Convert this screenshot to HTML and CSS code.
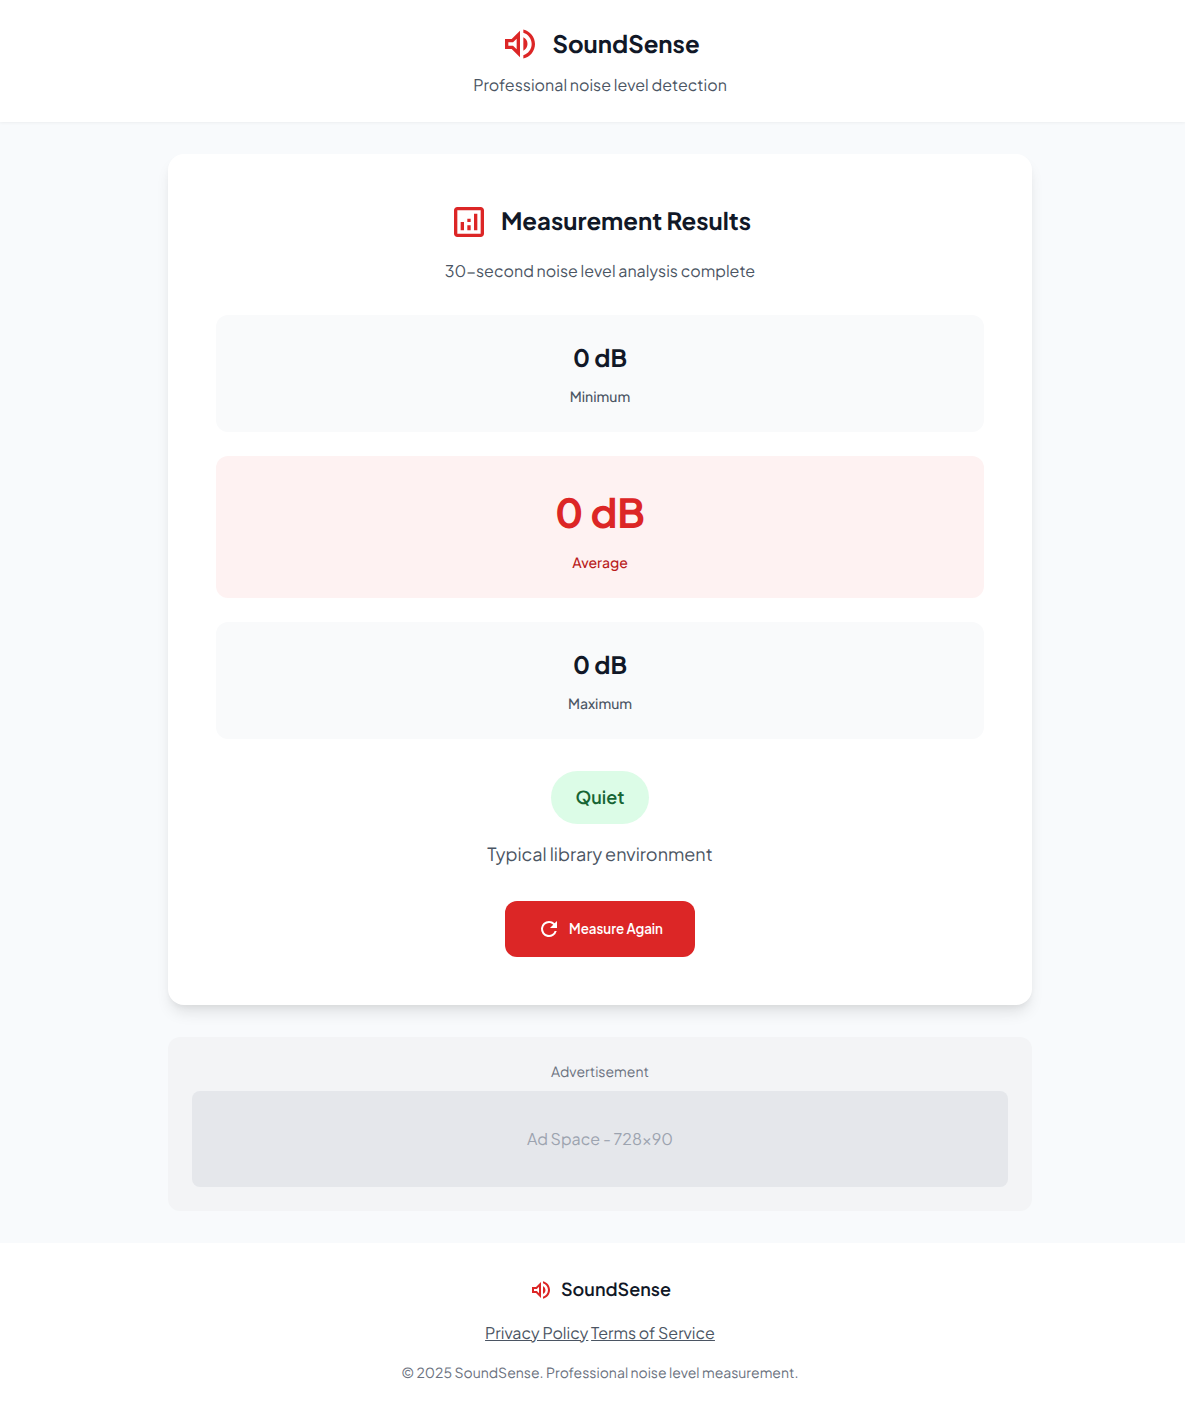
FILE: index.html
```html
<!DOCTYPE html>
<html lang="en">
<head>
<meta charset="utf-8">
<meta name="viewport" content="width=device-width, initial-scale=1">
<title>SoundSense</title>
<link rel="stylesheet" href="styles.css">
</head>
<body>
<svg class="sprite" aria-hidden="true">
  <symbol id="volume" viewBox="0 0 24 24"><path d="M3 9v6h4l5 5V4L7 9H3zm7-.17v6.34L7.830 13H5v-2h2.830L10 8.830zM16.500 12A4.500 4.500 0 0 0 14 7.970v8.050c1.480-.73 2.500-2.250 2.500-4.020zM14 3.230v2.060c2.890.86 5 3.540 5 6.710s-2.110 5.850-5 6.710v2.060c4.010-.91 7-4.490 7-8.770s-2.990-7.860-7-8.770z"/></symbol>
  <symbol id="analytics" viewBox="0 0 24 24"><path d="M19 3H5c-1.100 0-2 .9-2 2v14c0 1.100.9 2 2 2h14c1.100 0 2-.9 2-2V5c0-1.100-.9-2-2-2zm0 16H5V5h14v14zM7 12h2v5H7zm8-5h2v10h-2zm-4 7h2v3h-2zm0-4h2v2h-2z"/></symbol>
  <symbol id="refresh" viewBox="0 0 24 24"><path d="M17.650 6.350A7.960 7.960 0 0 0 12 4a8 8 0 1 0 7.730 10h-2.080A6 6 0 1 1 12 6c1.660 0 3.140.69 4.220 1.780L13 11h7V4l-2.350 2.350z"/></symbol>
</svg>
<header class="header">
  <h1 class="heading"><svg class="icon icon-large" aria-hidden="true"><use href="#volume"/></svg>SoundSense</h1>
  <p class="tagline">Professional noise level detection</p>
</header>
<main class="main">
  <section class="card">
    <h2 class="heading"><svg class="icon icon-large" aria-hidden="true"><use href="#analytics"/></svg>Measurement Results</h2>
    <p class="summary">30-second noise level analysis complete</p>
    <div class="stats">
      <div class="stat"><div class="value">0 dB</div><div class="label">Minimum</div></div>
      <div class="stat stat-average"><div class="value">0 dB</div><div class="label">Average</div></div>
      <div class="stat"><div class="value">0 dB</div><div class="label">Maximum</div></div>
    </div>
    <span class="badge">Quiet</span>
    <p class="description">Typical library environment</p>
    <button class="button" type="button"><svg class="icon icon-small" aria-hidden="true"><use href="#refresh"/></svg>Measure Again</button>
  </section>
  <aside class="ad">
    <div class="ad-label">Advertisement</div>
    <div class="ad-space">Ad Space - 728×90</div>
  </aside>
</main>
<footer class="footer">
  <div class="footer-brand"><svg class="icon icon-small" aria-hidden="true"><use href="#volume"/></svg>SoundSense</div>
  <nav class="links"><a href="#privacy">Privacy Policy</a> <a href="#terms">Terms of Service</a></nav>
  <p class="copyright">© 2025 SoundSense. Professional noise level measurement.</p>
</footer>
</body>
</html>
```
FILE: styles.css
```css
* { box-sizing: border-box; margin: 0; }

body {
  background: #f8fafc;
  color: #4b5563;
  font-family: "Plus Jakarta Sans", Inter, sans-serif;
  font-size: 16px;
  line-height: 1.6;
  text-align: center;
  text-rendering: geometricPrecision;
}

.sprite { display: none; }
.icon { flex: none; fill: #dc2626; }
.icon-large { width: 40px; height: 40px; }
.icon-small { width: 24px; height: 24px; }

.header {
  background: #fff;
  box-shadow: 0 1px 3px rgba(0, 0, 0, 0.05);
  padding: 24px 0 24px 15px;
}

.heading {
  display: flex;
  align-items: center;
  justify-content: center;
  gap: 12px;
  color: #111827;
  font-size: 24px;
  font-weight: 700;
}

.tagline { margin-top: 8px; }

.main {
  display: flex;
  flex-direction: column;
  align-items: center;
  gap: 32px;
  padding: 32px 16px 32px 31px;
}

.card {
  display: flex;
  flex-direction: column;
  align-items: center;
  width: 100%;
  max-width: 864px;
  padding: 48px;
  border-radius: 16px;
  background: #fff;
  box-shadow: 0 10px 15px -3px rgba(0, 0, 0, 0.1), 0 4px 6px -2px rgba(0, 0, 0, 0.05);
}

.summary { margin-top: 16px; }

.stats {
  display: grid;
  gap: 24px;
  width: 100%;
  margin: 32px 0;
}

.stat {
  padding: 24px;
  border-radius: 12px;
  background: #f9fafb;
}

.value {
  color: #111827;
  font-size: 24px;
  font-weight: 700;
}

.label {
  margin-top: 8px;
  font-size: 14px;
  font-weight: 500;
}

.stat-average { background: #fef2f2; }
.stat-average .value { color: #dc2626; font-size: 40px; }
.stat-average .label { color: #b91c1c; }

.badge {
  padding: 12px 24px;
  border-radius: 32px;
  background: #dcfce7;
  color: #166534;
  font-size: 18px;
  font-weight: 600;
}

.description {
  margin: 16px 0 32px;
  font-size: 18px;
}

.button {
  display: flex;
  align-items: center;
  gap: 8px;
  padding: 16px 32px;
  border: 0;
  border-radius: 12px;
  background: #dc2626;
  color: #fff;
  font-family: inherit;
  font-weight: 600;
  cursor: pointer;
}

.button .icon { fill: #fff; }

.ad {
  width: 100%;
  max-width: 864px;
  padding: 24px;
  border-radius: 12px;
  background: #f3f4f6;
}

.ad-label {
  margin-bottom: 8px;
  color: #6b7280;
  font-size: 14px;
}

.ad-space {
  display: flex;
  align-items: center;
  justify-content: center;
  min-height: 96px;
  border-radius: 8px;
  background: #e5e7eb;
  color: #9ca3af;
}

.footer {
  padding: 32px 0 32px 15px;
  background: #fff;
}

.footer-brand {
  display: flex;
  align-items: center;
  justify-content: center;
  gap: 8px;
  color: #111827;
  font-size: 18px;
  font-weight: 600;
}

.links { margin: 16px 0; }
.links a { color: inherit; }

.copyright {
  color: #6b7280;
  font-size: 14px;
}
```
